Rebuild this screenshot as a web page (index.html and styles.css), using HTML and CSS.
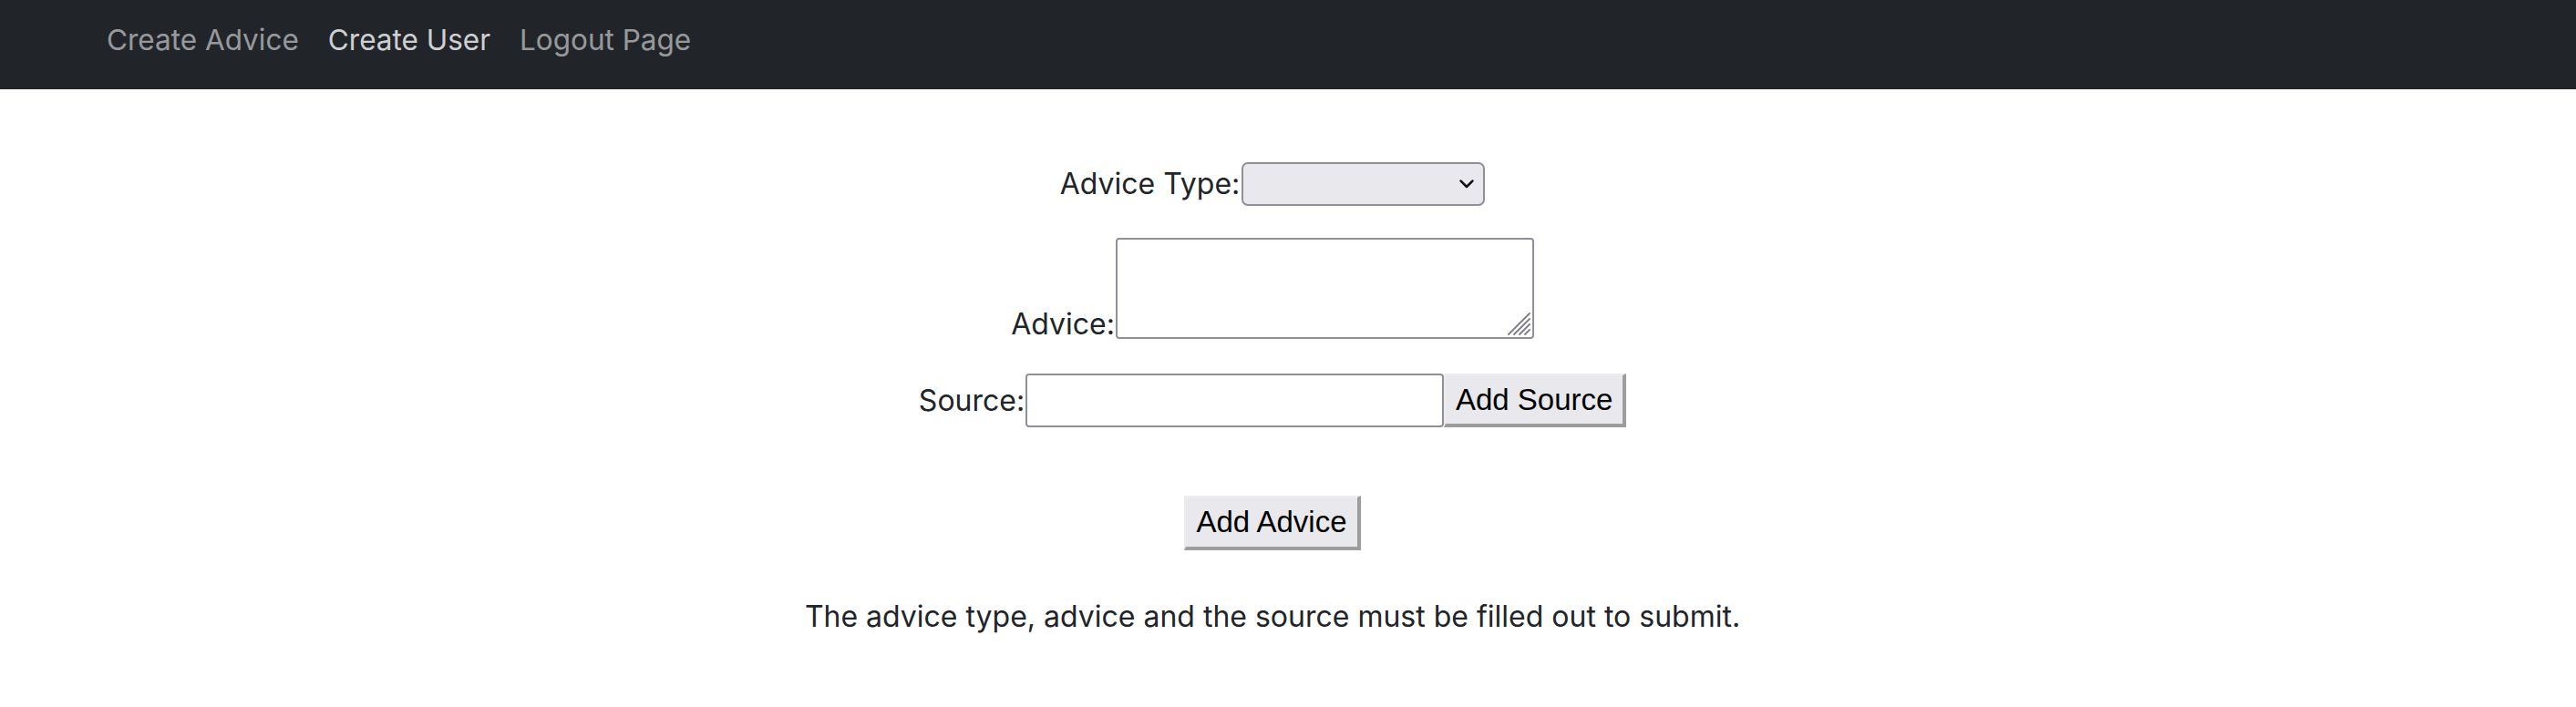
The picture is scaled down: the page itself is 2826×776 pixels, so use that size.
FILE: index.html
```html
<!DOCTYPE html>
<html lang="en">
<head>
<meta charset="utf-8">
<title>Create Advice</title>
<link rel="stylesheet" href="styles.css">
</head>
<body>
<nav class="navbar">
  <a class="nav-link" href="#">Create Advice</a>
  <a class="nav-link active" href="#">Create User</a>
  <a class="nav-link" href="#">Logout Page</a>
</nav>
<main class="content">
  <form class="advice-form">
    <div class="row row-center">
      <label class="lbl" for="type">Advice Type:</label>
      <span class="select-wrap">
        <select id="type" class="select"><option></option></select>
        <svg class="chevron" width="16" height="10" viewBox="0 0 16 10"><path d="M1.6 1.6 L8 8 L14.4 1.6" fill="none" stroke="#111" stroke-width="2.6" stroke-linecap="round" stroke-linejoin="round"/></svg>
      </span>
    </div>
    <div class="row row-end">
      <label class="lbl" for="advice">Advice:</label>
      <span class="textarea-wrap">
        <textarea id="advice" class="textarea"></textarea>
        <svg class="grip" width="26" height="26" viewBox="0 0 26 26"><g stroke="#7d7d85" stroke-width="1.8" stroke-linecap="round"><path d="M2 25 L25 2"/><path d="M8 25 L25 8"/><path d="M14 25 L25 14"/><path d="M20 25 L25 20"/></g></svg>
      </span>
    </div>
    <div class="row row-center">
      <label class="lbl" for="source">Source:</label>
      <input id="source" class="input" type="text">
      <button type="button" class="btn">Add Source</button>
    </div>
    <div class="row row-center submit-row">
      <button type="button" class="btn btn-submit">Add Advice</button>
    </div>
    <p class="note">The advice type, advice and the source must be filled out to submit.</p>
  </form>
</main>
</body>
</html>
```

FILE: styles.css
```css
html, body {
  margin: 0;
  padding: 0;
  background: #ffffff;
}
body {
  font-family: Inter, "Noto Sans", "Liberation Sans", sans-serif;
  color: #212529;
  font-size: 32px;
}
.navbar {
  height: 98px;
  background: #212529;
  display: flex;
  align-items: flex-start;
  padding: 20px 0 0 101px;
  box-sizing: border-box;
}
.nav-link {
  color: rgba(255, 255, 255, 0.55);
  text-decoration: none;
  font-size: 31.5px;
  padding: 0 16px;
  line-height: 48px;
}
.nav-link.active {
  color: rgba(255, 255, 255, 0.8);
}
.content {
  padding-right: 34px;
}
.advice-form {
  display: flex;
  flex-direction: column;
  align-items: center;
  padding-top: 80px;
}
.row {
  display: flex;
  justify-content: center;
}
.row-center { align-items: center; }
.row-end { align-items: flex-end; margin-top: 35px; }
.row-end + .row-center { margin-top: 38px; }
.lbl {
  line-height: 38px;
}
.row-end .lbl {
  line-height: 32px;
}
.select-wrap {
  position: relative;
  display: block;
  margin-left: 2px;
}
.select {
  appearance: none;
  -webkit-appearance: none;
  width: 267px;
  height: 48px;
  box-sizing: border-box;
  background: #e9e9ed;
  border: 2px solid #8f8f9d;
  border-radius: 7px;
  display: block;
  font-size: 26px;
  margin: 0;
}
.chevron {
  position: absolute;
  right: 12px;
  top: 19px;
  pointer-events: none;
}
.textarea-wrap {
  position: relative;
  display: block;
  margin-left: 1px;
}
.textarea {
  width: 459px;
  height: 111px;
  box-sizing: border-box;
  border: 2px solid #8f8f9d;
  border-radius: 4px;
  margin: 0;
  display: block;
  resize: none;
}
.grip {
  position: absolute;
  right: 4px;
  bottom: 4px;
  pointer-events: none;
}
.input {
  width: 459px;
  height: 59px;
  box-sizing: border-box;
  border: 2px solid #8f8f9d;
  border-radius: 4px;
  margin: 0 0 0 1px;
  display: block;
}
.btn {
  font-family: "Liberation Sans", Arial, sans-serif;
  font-size: 33px;
  color: #000;
  background: #e9e9ed;
  border-style: solid;
  border-width: 2px 4px 4px 2px;
  border-color: #ececec #9d9d9d #9d9d9d #ececec;
  box-sizing: border-box;
  height: 59px;
  width: 200px;
  padding: 0;
  margin: 0;
}
.submit-row {
  margin-top: 75px;
}
.btn-submit {
  width: 194px;
  height: 60px;
}
.note {
  margin: 54px 0 0 0;
  line-height: 38px;
}
```
